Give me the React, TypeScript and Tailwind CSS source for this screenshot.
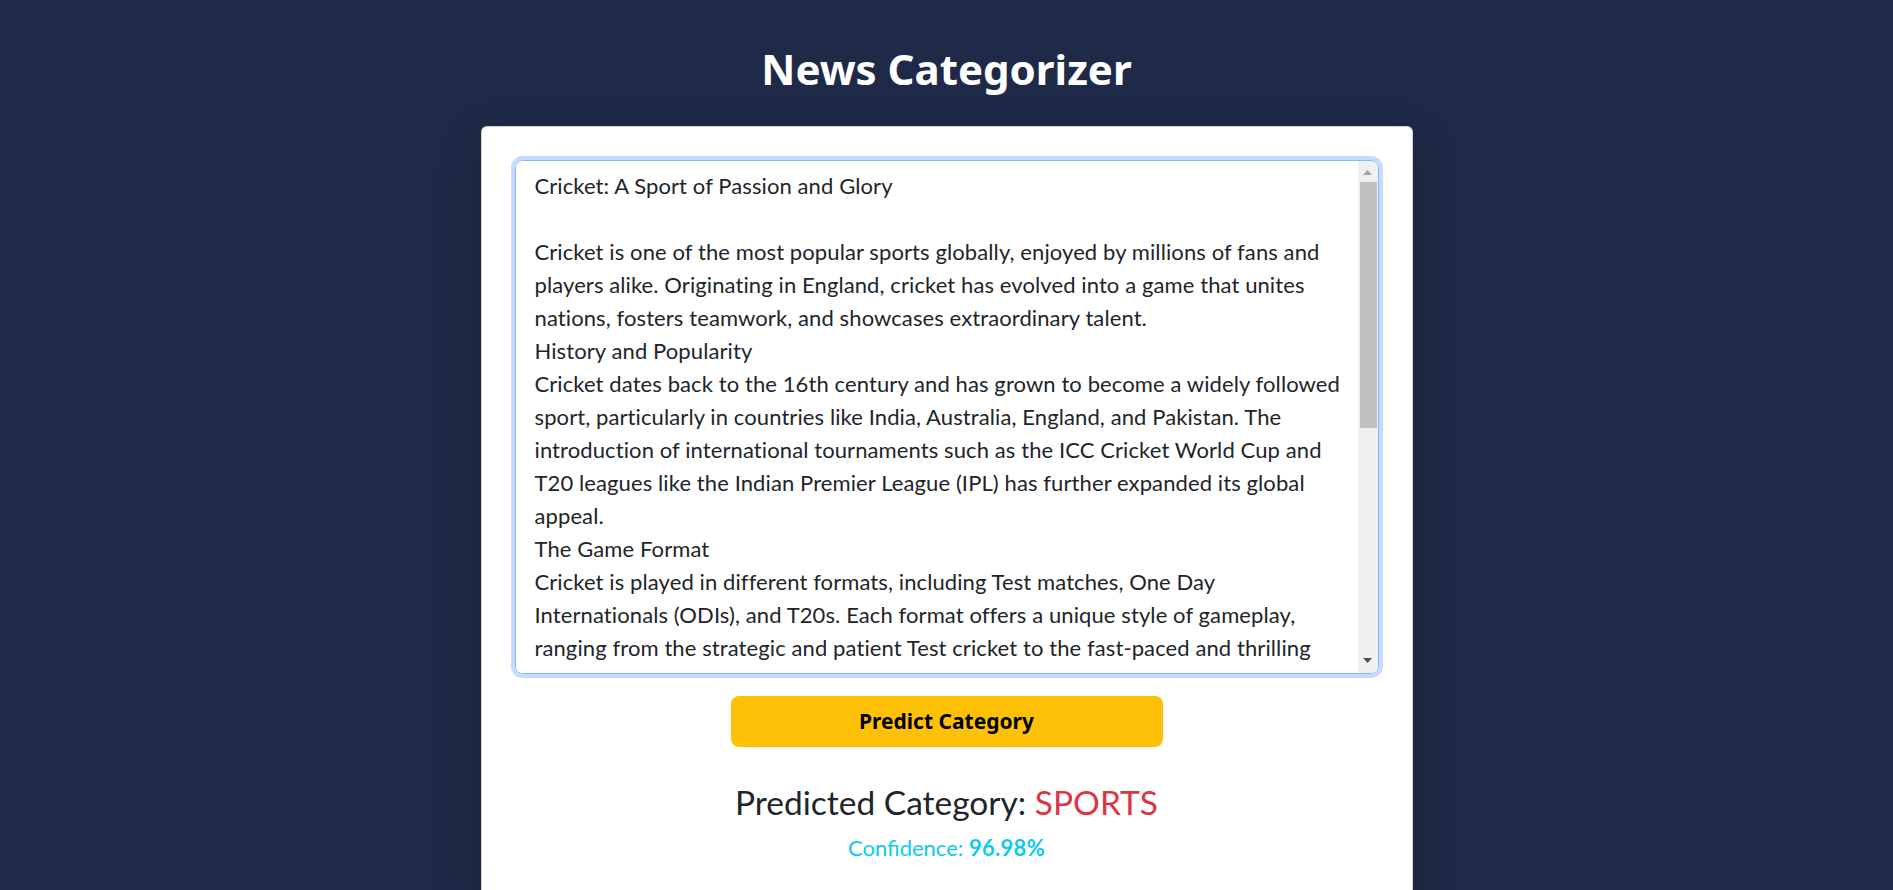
const ARTICLE = `Cricket: A Sport of Passion and Glory

Cricket is one of the most popular sports globally, enjoyed by millions of fans and
players alike. Originating in England, cricket has evolved into a game that unites
nations, fosters teamwork, and showcases extraordinary talent.
History and Popularity
Cricket dates back to the 16th century and has grown to become a widely followed
sport, particularly in countries like India, Australia, England, and Pakistan. The
introduction of international tournaments such as the ICC Cricket World Cup and
T20 leagues like the Indian Premier League (IPL) has further expanded its global
appeal.
The Game Format
Cricket is played in different formats, including Test matches, One Day
Internationals (ODIs), and T20s. Each format offers a unique style of gameplay,
ranging from the strategic and patient Test cricket to the fast-paced and thrilling
excitement of T20 matches.
Skills and Strategy
Cricket demands a combination of physical fitness, mental strength, and tactical
thinking. Batters need precision and timing, bowlers rely on speed, swing, and
spin, while fielders must be agile and alert at all times. Captains play a crucial
role in setting fields and making decisions under pressure.
Impact on Society
Beyond the field, cricket brings communities together and inspires young players
to pursue their dreams. Iconic players like Sachin Tendulkar, Virat Kohli, and
Ben Stokes have become role models for millions around the world.
Conclusion
Cricket is more than just a sport; it is a celebration of skill, spirit, and
unity. As the game continues to grow, it will keep captivating audiences for
generations to come.`;

function Scrollbar() {
  return (
    <div className="flex w-[20px] shrink-0 flex-col bg-[#f0f0f0]">
      <div className="flex h-[17px] items-end justify-center pb-[3px]">
        <svg width="9" height="5" viewBox="0 0 9 5">
          <path d="M0 5 L4.5 0 L9 5 Z" fill="#a3a3a3" />
        </svg>
      </div>
      <div className="ml-[2px] mr-[1px] mt-[4px] h-[246px] bg-[#c1c1c1]" />
      <div className="flex-1" />
      <div className="flex h-[17px] items-start justify-center pt-[2px]">
        <svg width="9" height="5" viewBox="0 0 9 5">
          <path d="M0 0 L9 0 L4.5 5 Z" fill="#505050" />
        </svg>
      </div>
    </div>
  );
}

export default function App() {
  return (
    <div className="min-h-screen bg-[#1f2a48] pt-[44px] font-['Lato',sans-serif]">
      <h1 className="text-center font-['Noto_Sans',sans-serif] text-[42px] font-bold leading-[50px] text-white">
        News Categorizer
      </h1>

      <div className="mx-auto mt-[32px] w-[932px] rounded-[6px] border border-black/[0.175] bg-white p-[33px] pb-[40px] shadow-[0_1rem_3rem_rgba(0,0,0,0.175)]">
        <div className="flex h-[514px] overflow-hidden rounded-[8px] border border-[#86b7fe] shadow-[0_0_0_4px_rgba(13,110,253,0.25)]">
          <textarea
            wrap="off"
            spellCheck={false}
            defaultValue={ARTICLE}
            className="min-w-0 flex-1 resize-none overflow-hidden bg-white py-2 pl-[19px] pr-4 text-[22px] leading-[33px] tracking-[0.1px] text-[#212529] outline-none [scrollbar-width:none]"
          />
          <Scrollbar />
        </div>

        <button className="mx-auto mt-[22px] flex h-[51px] w-1/2 items-center justify-center rounded-[8px] bg-[#ffc107] font-['Noto_Sans',sans-serif] text-[21px] font-bold text-black">
          Predict Category
        </button>

        <h3 className="mt-[36px] text-center text-[33.5px] leading-[38px] text-[#212529]">
          Predicted Category: <span className="text-[#dc3545]">SPORTS</span>
        </h3>
        <p className="mt-[12px] text-center text-[22px] leading-[30px] text-[#0dcaf0]">
          Confidence: <strong className="font-bold tracking-[0.3px]">96.98%</strong>
        </p>
      </div>
    </div>
  );
}
